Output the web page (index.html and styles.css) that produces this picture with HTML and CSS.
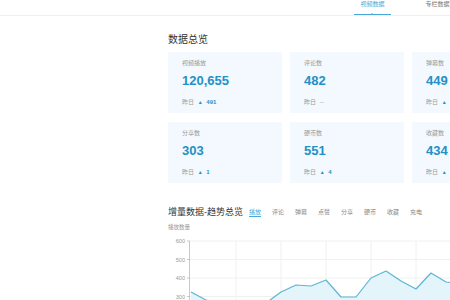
FILE: index.html
```html
<!DOCTYPE html>
<html lang="zh-CN">
<head>
    <meta charset="UTF-8" />
    <title>数据中心</title>
    <link rel="stylesheet" href="styles.css">
</head>
<body>
    <!-- Top tabs -->
    <header class="topbar">
        <div class="top-tab active">视频数据</div>
        <div class="top-tab">专栏数据</div>
    </header>

    <main class="main">
        <!-- Overview -->
        <h2 class="section-title">数据总览</h2>
        <div class="card-grid">
            <div class="card">
                <div class="card-label">视频播放</div>
                <div class="card-num">120,655</div>
                <div class="card-foot">昨日 <span class="up">▲</span> <b>491</b></div>
            </div>
            <div class="card">
                <div class="card-label">评论数</div>
                <div class="card-num">482</div>
                <div class="card-foot">昨日 <span class="flat">--</span></div>
            </div>
            <div class="card">
                <div class="card-label">弹幕数</div>
                <div class="card-num">449</div>
                <div class="card-foot">昨日 <span class="up">▲</span> <b>2</b></div>
            </div>
            <div class="card">
                <div class="card-label">点赞数</div>
                <div class="card-num">2,317</div>
                <div class="card-foot">昨日 <span class="up">▲</span> <b>12</b></div>
            </div>
            <div class="card">
                <div class="card-label">分享数</div>
                <div class="card-num">303</div>
                <div class="card-foot">昨日 <span class="up">▲</span> <b>1</b></div>
            </div>
            <div class="card">
                <div class="card-label">硬币数</div>
                <div class="card-num">551</div>
                <div class="card-foot">昨日 <span class="up">▲</span> <b>4</b></div>
            </div>
            <div class="card">
                <div class="card-label">收藏数</div>
                <div class="card-num">434</div>
                <div class="card-foot">昨日 <span class="up">▲</span> <b>3</b></div>
            </div>
            <div class="card">
                <div class="card-label">充电数</div>
                <div class="card-num">6</div>
                <div class="card-foot">昨日 <span class="flat">--</span></div>
            </div>
        </div>

        <!-- Trend -->
        <div class="trend-head">
            <h2 class="section-title trend-title">增量数据-趋势总览</h2>
            <div class="trend-tabs">
                <span class="trend-tab active">播放</span>
                <span class="trend-tab">评论</span>
                <span class="trend-tab">弹幕</span>
                <span class="trend-tab">点赞</span>
                <span class="trend-tab">分享</span>
                <span class="trend-tab">硬币</span>
                <span class="trend-tab">收藏</span>
                <span class="trend-tab">充电</span>
            </div>
        </div>
        <div class="trend-sub">播放数量</div>

        <svg class="chart" width="320" height="70" viewBox="0 0 320 70">
            <g class="grid">
                <line x1="21" y1="7" x2="320" y2="7" />
                <line x1="21" y1="25.5" x2="320" y2="25.5" />
                <line x1="21" y1="44" x2="320" y2="44" />
                <line x1="21" y1="62.5" x2="320" y2="62.5" />
                <line x1="68" y1="7" x2="68" y2="70" />
                <line x1="113" y1="7" x2="113" y2="70" />
                <line x1="158" y1="7" x2="158" y2="70" />
                <line x1="203" y1="7" x2="203" y2="70" />
                <line x1="248" y1="7" x2="248" y2="70" />
                <line x1="293" y1="7" x2="293" y2="70" />
            </g>
            <g class="axis">
                <line x1="21.5" y1="7" x2="21.5" y2="70" />
                <line x1="19" y1="7" x2="21.5" y2="7" />
                <line x1="19" y1="25.5" x2="21.5" y2="25.5" />
                <line x1="19" y1="44" x2="21.5" y2="44" />
                <line x1="19" y1="62.5" x2="21.5" y2="62.5" />
            </g>
            <g class="axis-label">
                <text x="17" y="9">600</text>
                <text x="17" y="27.5">500</text>
                <text x="17" y="46">400</text>
                <text x="17" y="64.5">300</text>
            </g>
            <path class="area" d="M23 58 L38 66 L53 69 L68 68 L83 71 L98 69 L113 58 L128 51 L143 52 L158 46 L173 63 L188 63 L203 44 L218 37 L233 47 L248 55 L263 39 L278 48 L293 50 L308 45 L308 70 L23 70 Z" />
            <path class="line" d="M23 58 L38 66 L53 69 L68 68 L83 71 L98 69 L113 58 L128 51 L143 52 L158 46 L173 63 L188 63 L203 44 L218 37 L233 47 L248 55 L263 39 L278 48 L293 50 L308 45" />
        </svg>
    </main>
</body>
</html>
```

FILE: styles.css
```css
/* Global */
* {
    box-sizing: border-box;
}

body {
    margin: 0;
    width: 640px;
    overflow: hidden;
    background: #fff;
    color: #333;
    font-family: 'Liberation Sans', 'Noto Sans CJK SC', sans-serif;
}

/* Top tabs */
.topbar {
    display: flex;
    height: 16px;
    padding-left: 354px;
    border-bottom: 1px solid #eef0f2;
}

.top-tab {
    position: relative;
    width: 37px;
    height: 15px;
    margin-right: 28px;
    font-size: 6px;
    line-height: 8px;
    text-align: center;
    color: #777;
}

.top-tab.active {
    color: #48a8d8;
    border-bottom: 1px solid #48a8d8;
}

.top-tab.active::after {
    content: '';
    position: absolute;
    left: 17px;
    bottom: 0;
    border: 1.5px solid transparent;
    border-bottom-color: #48a8d8;
}

/* Main */
.main {
    padding-left: 168px;
}

.section-title {
    margin: 0;
    font-size: 10px;
    line-height: 14px;
    font-weight: normal;
    color: #333;
}

.main > .section-title {
    margin-top: 17px;
}

/* Overview cards */
.card-grid {
    display: grid;
    grid-template-columns: repeat(4, 114px);
    gap: 9px 8px;
    margin-top: 5px;
}

.card {
    height: 61px;
    padding: 7px 14px 0;
    background: #f3f9fe;
}

.card-label {
    font-size: 6px;
    line-height: 8px;
    color: #999;
}

.card-num {
    margin-top: 6px;
    font-size: 13px;
    line-height: 16px;
    font-weight: 700;
    color: #2490c6;
}

.card-foot {
    margin-top: 9px;
    font-size: 6px;
    line-height: 8px;
    color: #999;
}

.card-foot .up {
    font-size: 5px;
    color: #2490c6;
    margin: 0 2px;
}

.card-foot b {
    color: #2490c6;
}

.card-foot .flat {
    margin-left: 2px;
    color: #999;
}

/* Trend */
.trend-head {
    display: flex;
    align-items: center;
    margin-top: 22px;
}

.trend-title {
    font-size: 9px;
}

.trend-tabs {
    display: flex;
    margin-left: 6px;
}

.trend-tab {
    width: 23px;
    font-size: 6px;
    line-height: 10px;
    color: #888;
}

.trend-tab.active {
    color: #48a8d8;
    text-decoration: underline;
    text-underline-offset: 2px;
}

.trend-sub {
    margin-top: 5px;
    font-size: 5.5px;
    line-height: 7px;
    color: #999;
}

.chart {
    display: block;
    margin-top: 3px;
}

.grid line {
    stroke: #f0f0f0;
    stroke-width: 1;
}

.axis line {
    stroke: #bbb;
    stroke-width: 0.8;
}

.axis-label text {
    font-size: 5.5px;
    fill: #999;
    text-anchor: end;
}

.area {
    fill: #e3f4fb;
}

.line {
    fill: none;
    stroke: #5cb6d2;
    stroke-width: 1.2;
    stroke-linejoin: round;
}
```
